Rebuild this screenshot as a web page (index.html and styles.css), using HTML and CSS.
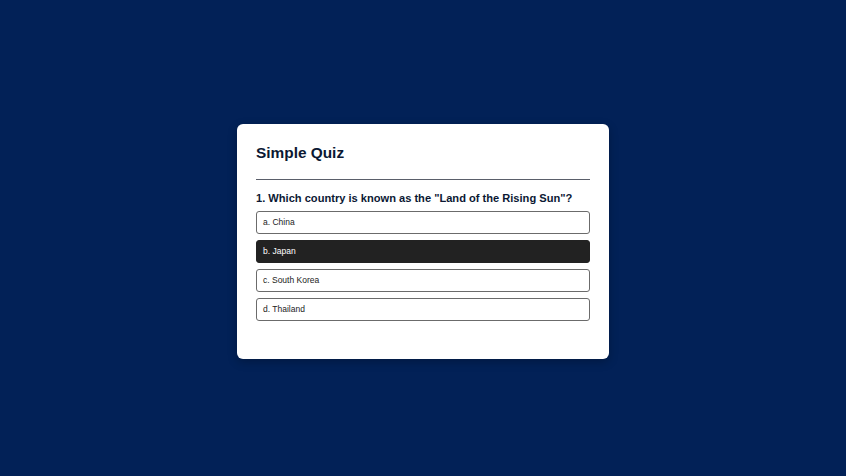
FILE: index.html
```html
<!DOCTYPE html>
<html lang="en">
<head>
<meta charset="utf-8">
<title>Simple Quiz</title>
<link rel="stylesheet" href="styles.css">
</head>
<body>
<main class="page">
  <section class="card">
    <h1 class="title">Simple Quiz</h1>
    <hr class="divider">
    <h2 class="question">1. Which country is known as the "Land of the Rising Sun"?</h2>
    <div class="options">
      <button class="option">a. China</button>
      <button class="option selected">b. Japan</button>
      <button class="option">c. South Korea</button>
      <button class="option">d. Thailand</button>
    </div>
  </section>
</main>
</body>
</html>
```
FILE: styles.css
```css
* { box-sizing: border-box; }
html, body { margin: 0; padding: 0; }
body {
  background: #022157;
  font-family: "Liberation Sans", Arial, sans-serif;
}
.page {
  min-height: 476px;
  display: flex;
  justify-content: center;
  align-items: center;
  padding-top: 7px;
}
.card {
  width: 372px;
  background: #ffffff;
  border-radius: 6px;
  padding: 20px 19px 38px;
  box-shadow: 0 3px 10px rgba(0, 0, 0, 0.25);
}
.title {
  margin: 0;
  font-size: 15.4px;
  line-height: 17px;
  font-weight: 700;
  color: #0b1833;
}
.divider {
  margin: 18px 0 11px;
  border: 0;
  border-top: 1px solid #5a5f6a;
  height: 0;
}
.question {
  margin: 0 0 6px;
  font-size: 11.1px;
  line-height: 14px;
  font-weight: 700;
  color: #0b1833;
  white-space: nowrap;
}
.options {
  display: flex;
  flex-direction: column;
  gap: 6px;
}
.option {
  display: block;
  width: 100%;
  text-align: left;
  font-family: "Liberation Sans", Arial, sans-serif;
  font-size: 8.5px;
  line-height: 11px;
  padding: 5px 6px;
  border: 1px solid #6b6b6b;
  border-radius: 3px;
  background: #ffffff;
  color: #222222;
}
.option.selected {
  background: #222222;
  border-color: #222222;
  color: #ffffff;
}
```
